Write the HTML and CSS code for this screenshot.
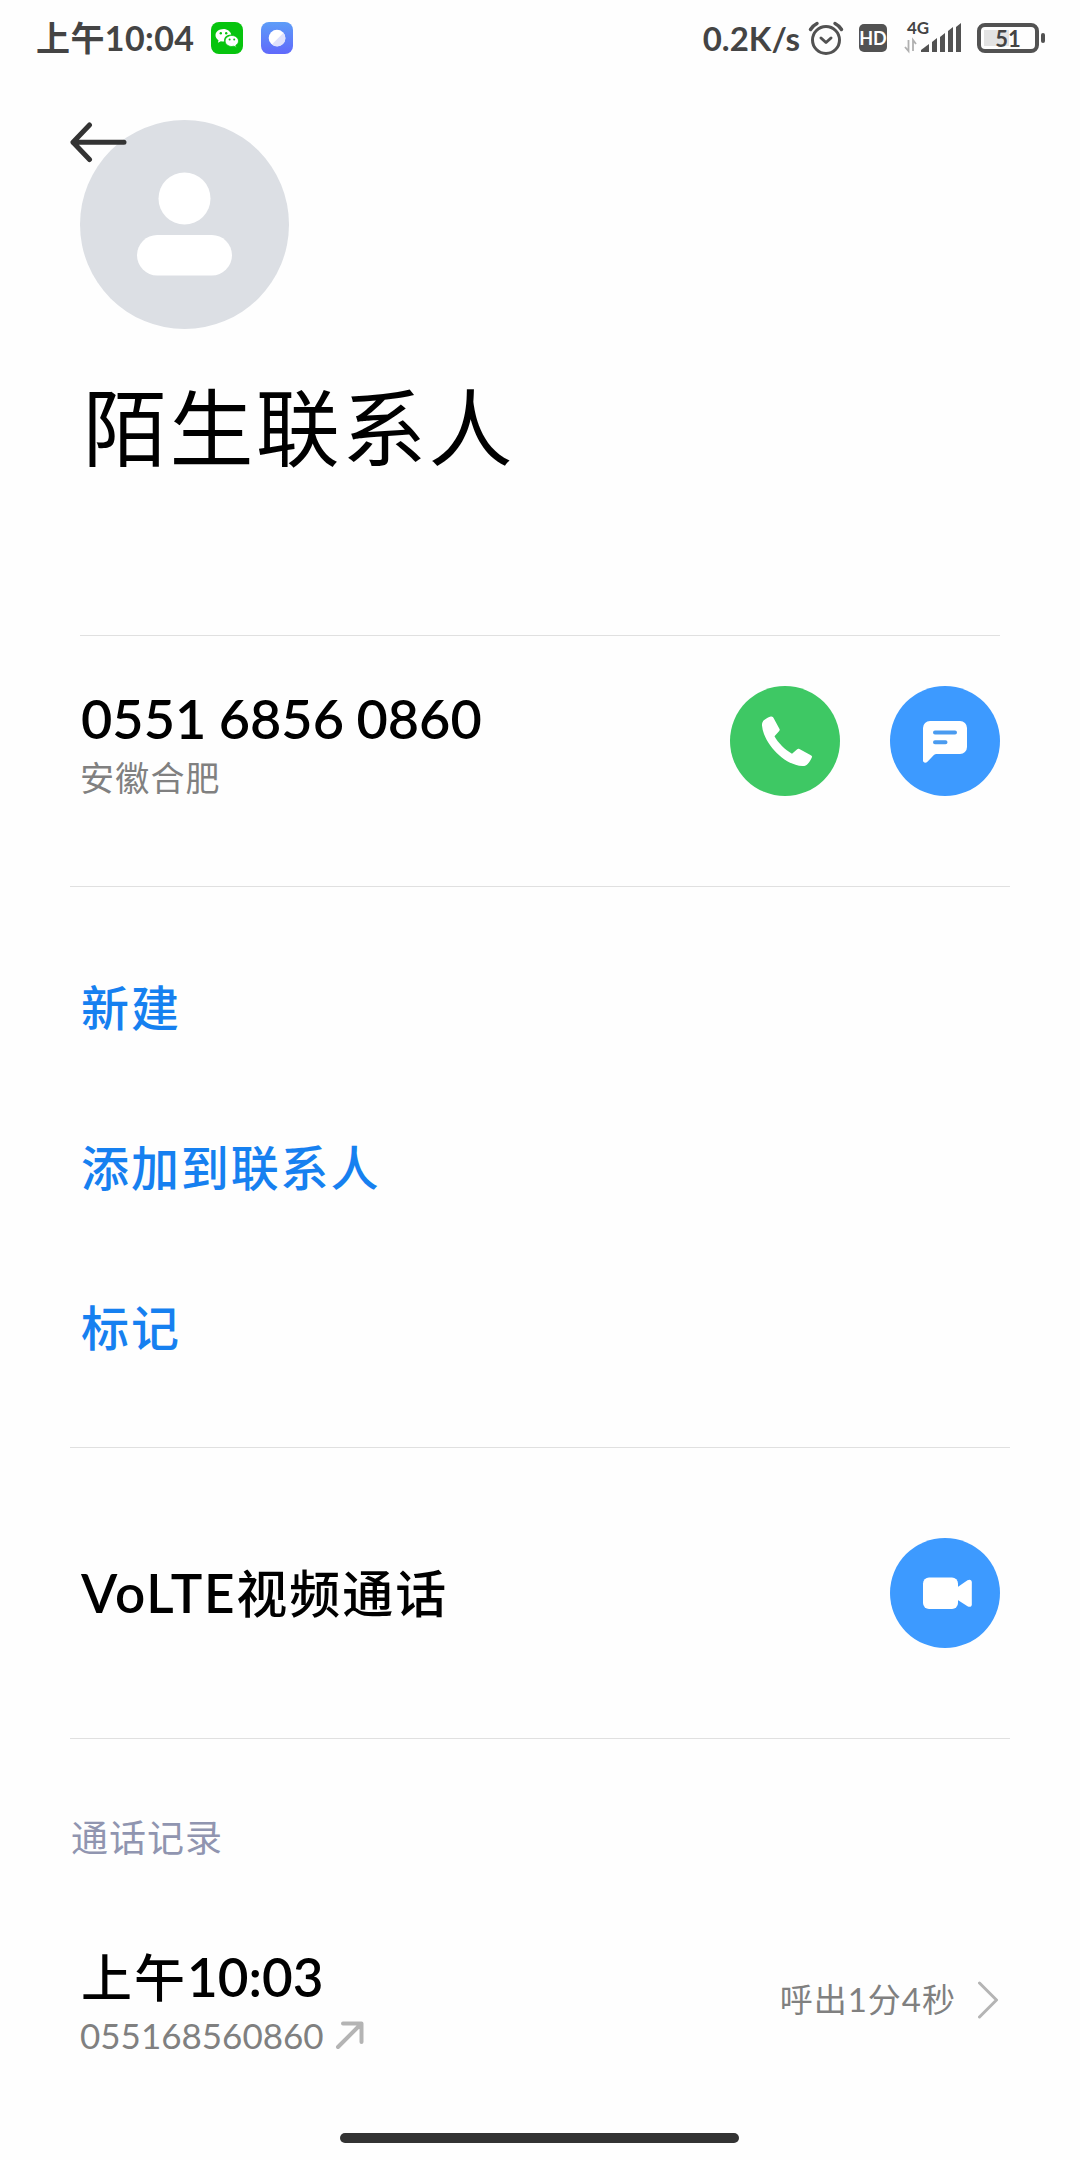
FILE: index.html
```
<!DOCTYPE html>
<html lang="zh-CN">
<head>
  <meta charset="utf-8">
  <title>陌生联系人</title>
  <link rel="stylesheet" href="styles.css">
</head>
<body>

  <header class="status">
    <span class="status-time"><span>上午</span>10:04</span>
    <svg class="app" width="32" height="32" viewBox="0 0 32 32">
      <rect width="32" height="32" rx="8" fill="#07c40e"/>
      <path d="M12.500 7C8 7 4.500 9.800 4.500 13.300c0 2 1.200 3.700 3 4.900l-.6 2.600 3-1.500c.8.2 1.700.3 2.600.3h.8c-1-4 2.700-7.200 7-7C19.500 9.300 16.300 7 12.500 7z" fill="#fff"/>
      <path d="M20.800 13.500c-3.800 0-6.700 2.500-6.700 5.500s2.900 5.500 6.700 5.500c.8 0 1.500-.1 2.200-.3l2.400 1.200-.6-2.100c1.600-1 2.700-2.500 2.700-4.300 0-3-2.900-5.500-6.700-5.500z" fill="#fff" stroke="#07c40e" stroke-width=".8"/>
      <circle cx="9.800" cy="11.300" r="1.200" fill="#07c40e"/>
      <circle cx="15.200" cy="11.300" r="1.200" fill="#07c40e"/>
      <circle cx="18.600" cy="17.400" r="1" fill="#07c40e"/>
      <circle cx="23.200" cy="17.400" r="1" fill="#07c40e"/>
    </svg>
    <svg class="app" width="32" height="32" viewBox="0 0 32 32">
      <defs>
        <linearGradient id="blue" x1="0" y1="0" x2="0" y2="1">
          <stop offset="0" stop-color="#5d9df8"/>
          <stop offset="1" stop-color="#6069fb"/>
        </linearGradient>
      </defs>
      <rect width="32" height="32" rx="8" fill="url(#blue)"/>
      <circle cx="16" cy="16" r="8.300" fill="#fff"/>
      <path d="M22.500 10.800A8.300 8.300 0 0 1 10.800 22.500z" fill="#dfe2fc"/>
    </svg>

    <span class="speed">0.2K/s</span>
    <svg class="alarm" width="36" height="36" viewBox="0 0 36 36" fill="none" stroke="#525252" stroke-linecap="round">
      <circle cx="18" cy="20" r="13.500" stroke-width="3"/>
      <path d="M13 18l5 4.500 5-4.500" stroke-width="3" stroke-linejoin="round"/>
      <path d="M2.500 9.500Q5 5.500 9 3.500M33.500 9.500Q31 5.500 27 3.500" stroke-width="3.500"/>
    </svg>
    <span class="hd">HD</span>
    <div class="signal">
      <span class="net">4G</span>
      <svg width="58" height="32" viewBox="0 0 58 32">
        <path d="M4.500 17v11L1 24M9 28V17l3 4" fill="none" stroke="#b0b0b0" stroke-width="1.800"/>
        <g fill="#525252">
          <path d="M17 29v-2l8-6v8z"/>
          <path d="M28 29V19l5-4v14z"/>
          <path d="M36 29V14l5-4v19z"/>
          <path d="M44 29V8l5-4v25z"/>
          <path d="M52 29V4l5-4v29z"/>
        </g>
      </svg>
    </div>
    <div class="battery"><span class="level">51</span></div>
  </header>

  <section class="profile">
    <svg class="back" width="58" height="42" viewBox="0 0 58 42" fill="none" stroke="#333" stroke-width="5" stroke-linecap="round" stroke-linejoin="round">
      <path d="M20.500 3L4 20.200l16.500 17.300M4 20.200h51"/>
    </svg>
    <svg class="avatar" width="209" height="209" viewBox="0 0 209 209">
      <circle cx="104.500" cy="104.500" r="104.500" fill="#dcdfe4"/>
      <circle cx="104.500" cy="78.500" r="26" fill="#fff"/>
      <rect x="57" y="115" width="95" height="40.500" rx="20.200" fill="#fff"/>
    </svg>
    <h1 class="name">陌生联系人</h1>
  </section>

  <section class="phone">
    <div class="phone-text">
      <div class="number">0551 6856 0860</div>
      <div class="place">安徽合肥</div>
    </div>
    <a class="round call">
      <svg width="110" height="110" viewBox="0 0 110 110">
        <path d="M41.500 30.500c1 0 1.700.8 2.200 1.700L49.500 43c.4.8.3 1.300-.3 2l-4.700 5.200c3.500 6.500 10.500 13.500 17.500 17.500l5.200-4.500c.8-.7 1.300-.7 2.200-.3l11 6c1.500.8 2 1.500 1.300 2.800-1.200 2.800-3 5.300-4.800 7-1.200 1-2.600 1.400-4.400 1.300C54 79.500 33.500 57 32 39.500c-.2-2.400.6-4 2.200-5.400 2-1.600 4-2.700 5.800-3.300.5-.2 1-.3 1.500-.3z" fill="#fff"/>
      </svg>
    </a>
    <a class="round">
      <svg width="110" height="110" viewBox="0 0 110 110">
        <path d="M40 35h30a7 7 0 0 1 7 7v19a7 7 0 0 1-7 7H46.500q-1.500 0-2.600 1l-6.500 6.800c-1.700 1.500-4.400 1-4.400-1.300V42a7 7 0 0 1 7-7z" fill="#fff"/>
        <path d="M45 46.500h20M45 56.300h10.500" stroke="#4a9bf0" stroke-width="4" stroke-linecap="round"/>
      </svg>
    </a>
  </section>

  <nav class="actions">
    <a>新建</a>
    <a>添加到联系人</a>
    <a>标记</a>
  </nav>

  <section class="volte">
    <div class="volte-text"><span class="latin">VoLTE</span><span class="zh">视频通话</span></div>
    <a class="round">
      <svg width="110" height="110" viewBox="0 0 110 110" fill="#fff">
        <rect x="33" y="39.500" width="35" height="31.500" rx="6"/>
        <path d="M67 49.500l10.500-7.200c2.300-1.400 4.300-.5 4.300 2v21.900c0 2.500-2 3.400-4.300 2L67 61.500z"/>
      </svg>
    </a>
  </section>

  <section class="history">
    <h2>通话记录</h2>
    <div class="record">
      <div class="record-text">
        <div class="time"><span class="zh">上午</span>10:03</div>
        <div class="from">
          055168560860
          <svg width="30" height="30" viewBox="0 0 30 30" fill="none" stroke="#b4b4b4" stroke-width="4" stroke-linecap="round" stroke-linejoin="round">
            <path d="M3 27L26 4M8 3.500h18.500V22"/>
          </svg>
        </div>
      </div>
      <span class="duration">呼出1分4秒</span>
      <svg width="22" height="38" viewBox="0 0 22 38" fill="none" stroke="#b4b4b4" stroke-width="3" stroke-linecap="round" stroke-linejoin="round">
        <path d="M1.500 2l17 17-17 17"/>
      </svg>
    </div>
  </section>

  <div class="home-bar"></div>

</body>
</html>
```

FILE: styles.css
```
* {
  box-sizing: border-box;
}
body {
  margin: 0;
  width: 1080px;
  height: 2160px;
  background-color: #fefefe;
  font-family: Lato, "Noto Sans CJK SC", sans-serif;
  color: #000;
  display: flex;
  flex-direction: column;
  overflow: hidden;
}
svg {
  display: block;
  flex: none;
}

/* status bar */
.status {
  height: 76px;
  padding: 0 36px 0 36px;
  display: flex;
  align-items: center;
  color: #444;
  font-weight: 700;
}
.status-time {
  font-size: 34px;
  line-height: 48px;
  letter-spacing: .4px;
  width: 175px;
  white-space: nowrap;
}
.status .app {
  margin-right: 18px;
}
.speed {
  font-size: 33px;
  margin-left: auto;
}
.alarm {
  margin-left: 8px;
}
.hd {
  width: 28px;
  height: 28px;
  margin-left: 15px;
  border-radius: 5px;
  background-color: #525252;
  color: #fff;
  font-size: 18px;
  line-height: 29px;
  text-align: center;
}
.signal {
  margin-left: 17px;
  padding-top: 1px;
  position: relative;
}
.net {
  position: absolute;
  top: -3px;
  left: 3px;
  font-size: 17px;
  line-height: 17px;
}
.battery {
  width: 62px;
  height: 30px;
  margin-left: 15px;
  margin-right: 5px;
  border: 4px solid #525252;
  border-radius: 8px;
  position: relative;
  background: linear-gradient(#e3e3e3, #e3e3e3) 3px 3px / 25px 16px no-repeat;
}
.battery::after {
  content: "";
  position: absolute;
  top: 6px;
  right: -10px;
  width: 4px;
  height: 10px;
  border-radius: 2px;
  background-color: #525252;
}
.level {
  display: block;
  font-size: 22px;
  line-height: 24px;
  text-align: center;
}

/* contact */
.profile {
  position: relative;
  height: 559px;
  padding: 44px 80px 0;
}
.back {
  position: absolute;
  top: 46px;
  left: 69px;
}
.name {
  margin: 39px 0 0 3px;
  font-size: 84px;
  line-height: 120px;
  font-weight: 400;
  letter-spacing: 2.4px;
}
.phone {
  height: 251px;
  margin: 0 80px;
  padding-top: 50px;
  border-top: 1px solid #e0e0e0;
  display: flex;
  gap: 50px;
}
.phone-text {
  flex: 1;
}
.number {
  padding-left: 1px;
  font-size: 54px;
  line-height: 66px;
  font-weight: 600;
  word-spacing: -1px;
}
.place {
  margin-top: 6px;
  font-size: 34px;
  line-height: 40px;
  letter-spacing: 1.2px;
  color: #808080;
}
.round {
  flex: none;
  width: 110px;
  height: 110px;
  border-radius: 50%;
  background-color: #3d9aff;
}
.call {
  background-color: #3ec864;
}

.actions {
  height: 561px;
  margin: 0 70px;
  padding: 41px 11px 0;
  border-top: 1px solid #e0e0e0;
}
.actions a {
  display: block;
  font-size: 48px;
  line-height: 160px;
  font-weight: 500;
  letter-spacing: 1.9px;
  color: #1680f0;
}

.volte {
  height: 291px;
  margin: 0 70px;
  padding: 0 10px;
  border-top: 1px solid #e0e0e0;
  display: flex;
  align-items: center;
  justify-content: space-between;
}
.volte-text,
.time {
  padding-left: 1px;
  font-size: 53px;
  line-height: 70px;
  font-weight: 600;
}
.latin {
  letter-spacing: 1.8px;
}
.zh {
  font-size: 51px;
  font-weight: 500;
  letter-spacing: 2px;
}

/* call history */
.history {
  margin: 0 70px;
  border-top: 1px solid #e0e0e0;
}
.history h2 {
  margin: 74px 0 0 1px;
  font-size: 37px;
  line-height: 50px;
  font-weight: 400;
  letter-spacing: 1px;
  color: #9095b0;
}
.record {
  margin-top: 79px;
  padding: 0 10px;
  display: flex;
  align-items: center;
}
.record-text {
  flex: 1;
}
.from {
  display: flex;
  align-items: center;
  gap: 11px;
  font-size: 35px;
  line-height: 44px;
  color: #808080;
}
.duration {
  font-size: 33px;
  letter-spacing: 1px;
  margin-right: 22px;
  padding-bottom: 3px;
  color: #808080;
}

.home-bar {
  width: 399px;
  height: 10px;
  margin: auto 0 17px 340px;
  border-radius: 5px;
  background-color: #333;
}
```
